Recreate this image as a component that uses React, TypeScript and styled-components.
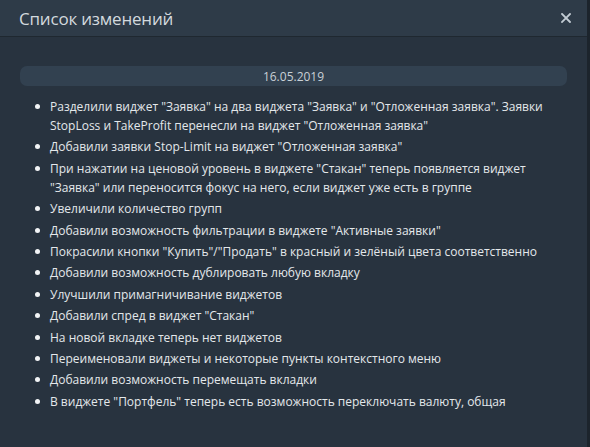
import React from "react";
import styled, { createGlobalStyle } from "styled-components";

const Global = createGlobalStyle`
  html, body { margin: 0; padding: 0; background: #28333f; }
  #root { width: 590px; height: 447px; }
`;

const Modal = styled.div`
  width: 590px;
  height: 447px;
  box-sizing: border-box;
  background: #28333f;
  border-right: 3px solid #1c242c;
  display: flex;
  flex-direction: column;
  font-family: "Open Sans", "Noto Sans", sans-serif;
  overflow: hidden;
`;

const Header = styled.div`
  height: 37px;
  box-sizing: border-box;
  display: flex;
  align-items: center;
  justify-content: space-between;
  padding: 0 15px 0 19px;
  background: #2e3b48;
  border-bottom: 1px solid #1f2830;
  flex-shrink: 0;
`;

const Title = styled.h1`
  margin: 0;
  font-size: 17px;
  font-weight: 400;
  color: #d3d9de;
  letter-spacing: -0.2px;
`;

const Close = styled.button`
  background: none;
  border: none;
  padding: 0;
  width: 12px;
  height: 12px;
  display: flex;
  align-items: center;
  justify-content: center;
  cursor: pointer;
`;

const Body = styled.div`
  padding: 29px 20px 0 20px;
`;

const DateBar = styled.div`
  height: 20px;
  border-radius: 7px;
  background: #324150;
  color: #c9d0d6;
  font-size: 12px;
  display: flex;
  align-items: center;
  justify-content: center;
`;

const List = styled.ul`
  margin: 11px 0 0 0;
  padding: 0 0 0 30px;
  list-style: none;
  display: flex;
  flex-direction: column;
  gap: 2.4px;
`;

const Item = styled.li`
  position: relative;
  color: #e4e8eb;
  font-size: 12px;
  line-height: 19px;
  padding-right: 20px;
  &::before {
    content: "";
    position: absolute;
    left: -15px;
    top: 7px;
    width: 5px;
    height: 5px;
    border-radius: 50%;
    background: #f2f4f6;
  }
`;

const items = [
  'Разделили виджет "Заявка" на два виджета "Заявка" и "Отложенная заявка". Заявки StopLoss и TakeProfit перенесли на виджет "Отложенная заявка"',
  'Добавили заявки Stop-Limit на виджет "Отложенная заявка"',
  'При нажатии на ценовой уровень в виджете "Стакан" теперь появляется виджет "Заявка" или переносится фокус на него, если виджет уже есть в группе',
  "Увеличили количество групп",
  'Добавили возможность фильтрации в виджете "Активные заявки"',
  'Покрасили кнопки "Купить"/"Продать" в красный и зелёный цвета соответственно',
  "Добавили возможность дублировать любую вкладку",
  "Улучшили примагничивание виджетов",
  'Добавили спред в виджет "Стакан"',
  "На новой вкладке теперь нет виджетов",
  "Переименовали виджеты и некоторые пункты контекстного меню",
  "Добавили возможность перемещать вкладки",
  'В виджете "Портфель" теперь есть возможность переключать валюту, общая',
];

export default function App() {
  return (
    <>
      <Global />
      <Modal>
        <Header>
          <Title>Список изменений</Title>
          <Close aria-label="Закрыть">
            <svg width="10" height="10" viewBox="0 0 10 10">
              <path d="M1 1L9 9M9 1L1 9" stroke="#c3ccd4" strokeWidth="1.8" strokeLinecap="square" />
            </svg>
          </Close>
        </Header>
        <Body>
          <DateBar>16.05.2019</DateBar>
          <List>
            {items.map((t, i) => (
              <Item key={i}>{t}</Item>
            ))}
          </List>
        </Body>
      </Modal>
    </>
  );
}
